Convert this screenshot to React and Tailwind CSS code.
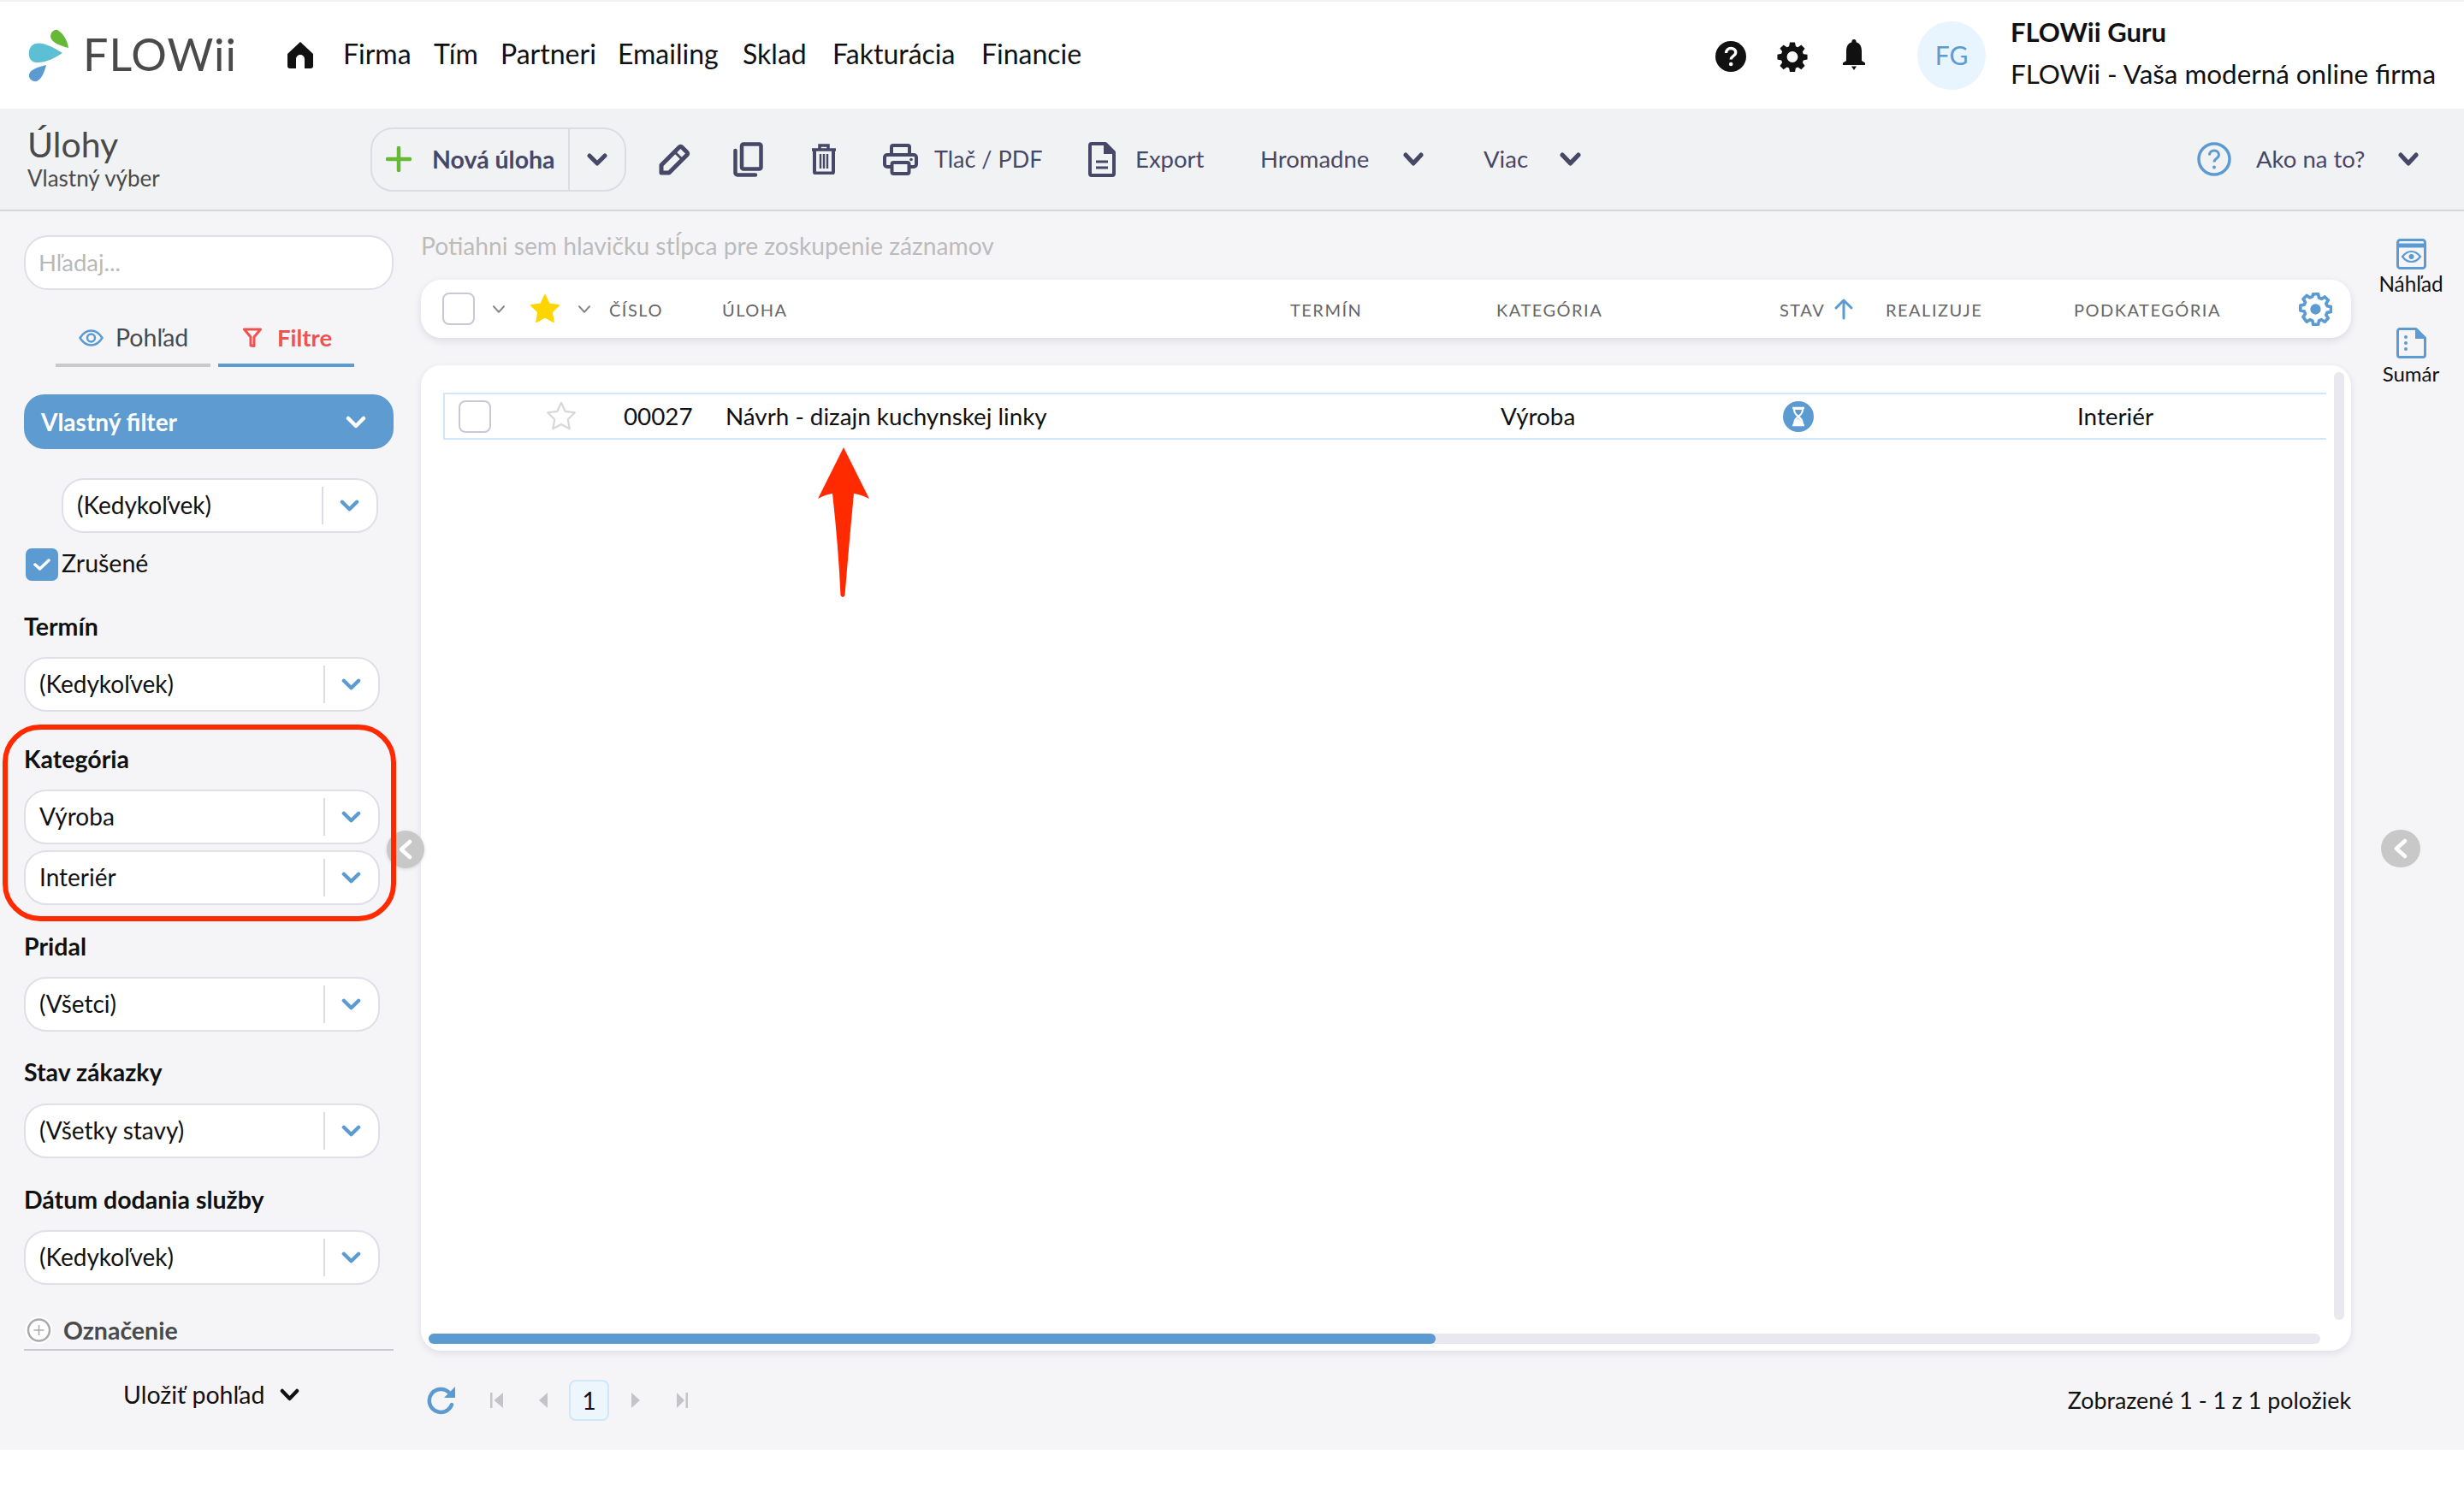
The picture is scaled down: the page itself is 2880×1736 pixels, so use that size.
import React from "react";

const Chev = ({ w = 24, h = 15, sw = 5, color = "#474867", className = "" }) => (
  <svg width={w} height={h} viewBox="0 0 24 15" className={"shrink-0 " + className} preserveAspectRatio="none">
    <polyline points="3,3 12,12 21,3" fill="none" stroke={color} strokeWidth={sw} strokeLinecap="round" strokeLinejoin="round" />
  </svg>
);

const STAR = "M12 1.5l3.2 6.8 7.3 1-5.3 5.2 1.3 7.4-6.5-3.6-6.5 3.6 1.3-7.4-5.3-5.2 7.3-1z";

const Select = ({ children, w = "w-[416px]", ml = "ml-[28px]", mt = "mt-[17px]" }) => (
  <div className={`${w} ${ml} ${mt} h-[64px] shrink-0 flex items-center rounded-[26px] border-2 border-[#dfdfe8] bg-white`}>
    <div className="flex-1 pl-[16px] -mt-[2px] text-[28px] text-[#111]">{children}</div>
    <div className="w-[2px] h-[44px] bg-[#dcdce4]" />
    <div className="w-[60px] mr-[2px] flex items-center justify-center">
      <Chev w={23} h={14} sw={4.5} color="#5c9bd1" />
    </div>
  </div>
);

const Label = ({ children, mt }) => (
  <div className={`${mt} ml-[28px] h-[36px] flex items-center text-[28.5px] font-bold text-[#111]`}><span className="-mt-[2px]">{children}</span></div>
);

const Nav = ({ w, children }) => <div className={`${w} shrink-0 text-[32px] text-[#111]`}>{children}</div>;

const Th = ({ w, children }) => (
  <div className={`${w} shrink-0 text-[20px] tracking-[1.5px] text-[#666]`}>{children}</div>
);

const Tool = ({ ml, w, children }) => (
  <div className={`${ml} ${w} shrink-0 text-[27.5px] text-[#474867] flex items-center`}>{children}</div>
);

export default function App() {
  return (
    <div className="relative w-[2880px] h-[1736px] overflow-hidden bg-white whitespace-nowrap [font-family:Lato,sans-serif]">
      <div className="h-[2px] bg-[#f1f1f3]" />
      {/* Header */}
      <header className="h-[125px] flex items-center bg-white">
        <svg width="50" height="62" viewBox="32 32 50 62" className="ml-[32px] shrink-0">
          <path d="M67 33C73 36 79 45 80 54C72 52 60 48 59 41C59 36 63 32 67 33Z" fill="#66b936" />
          <path d="M73 60C64 66 52 72 42 71C35 70 33 64 34 58C35 50 42 47 50 49C58 51 67 56 73 60Z" fill="#5dbfd3" />
          <path d="M54 74C52 82 49 90 43 93C38 94 33 90 34 85C35 79 46 76 54 74Z" fill="#5c9bd1" />
        </svg>
        <div className="ml-[15px] w-[239px] -mt-[3px] shrink-0 text-[52px] leading-none tracking-[1px] text-[#4a4a4a]">FLOWii</div>
        <svg width="30" height="31" viewBox="0 0 30 31" className="shrink-0">
          <path d="M15 0L30 14V28a3 3 0 0 1-3 3H20V20a5 5 0 0 0-10 0V31H3a3 3 0 0 1-3-3V14Z" fill="#111" />
        </svg>
        <div className="ml-[35px] -mt-[3px] flex">
          <Nav w="w-[106px]">Firma</Nav>
          <Nav w="w-[78px]">Tím</Nav>
          <Nav w="w-[137px]">Partneri</Nav>
          <Nav w="w-[146px]">Emailing</Nav>
          <Nav w="w-[105px]">Sklad</Nav>
          <Nav w="w-[174px]">Fakturácia</Nav>
          <Nav w="w-[117px]">Financie</Nav>
        </div>
        <svg width="36" height="36" viewBox="0 0 36 36" className="ml-[741px] mt-[2px] shrink-0">
          <circle cx="18" cy="18" r="18" fill="#111" />
          <path d="M12.5 14c0-3.5 2.5-5.5 5.7-5.5s5.500 2 5.500 4.800c0 4.500-5.500 4-5.500 8.200" fill="none" stroke="#fff" strokeWidth="3.4" />
          <circle cx="18.2" cy="27" r="2.3" fill="#fff" />
        </svg>
        <svg width="36" height="36" viewBox="0 0 24 24" className="ml-[36px] mt-[2px] shrink-0">
          <path fill="#111" fillRule="evenodd" d="M10 1h4l.6 3.100 1.700.7 2.600-1.800 2.800 2.800-1.800 2.600.7 1.700L23.700 10.500v3.900l-3.100.6-.7 1.700 1.800 2.600-2.800 2.800-2.600-1.800-1.700.7-.6 3.100h-4l-.6-3.100-1.700-.7-2.600 1.800-2.800-2.800 1.800-2.600-.7-1.700L.3 14.400v-3.900l3.100-.6.7-1.700-1.800-2.600L5.100 3l2.600 1.800 1.700-.7zM12 8a4.300 4.300 0 1 0 0 8.600A4.300 4.300 0 0 0 12 8z" />
        </svg>
        <svg width="28" height="36" viewBox="0 0 28 36" className="ml-[40px] shrink-0 -mt-[2px]">
          <path fill="#111" d="M14 0a2.500 2.500 0 0 1 2.500 3.200C21.500 4.500 23 9 23 14v11l4 2.500V30H1v-2.500L5 25V14c0-5 1.500-9.500 6.500-10.800A2.500 2.500 0 0 1 14 0z" />
          <path fill="#111" d="M11 31.500h6L14 36z" />
        </svg>
        <div className="ml-[60px] w-[80px] h-[80px] shrink-0 rounded-full bg-[#e8f4fe] flex items-center justify-center text-[30px] text-[#5c9bd1]">FG</div>
        <div className="ml-[29px] shrink-0">
          <div className="h-[40px] -mt-[5px] flex items-center text-[31px] font-bold text-[#111]">FLOWii Guru</div>
          <div className="h-[40px] mt-[9px] flex items-center text-[31.4px] text-[#111]">FLOWii - Vaša moderná online firma</div>
        </div>
      </header>

      {/* Toolbar */}
      <div className="h-[120px] flex items-center bg-[#f1f2f4] border-b-2 border-[#d5d6d9]">
        <div className="w-[433px] shrink-0 pl-[32px] text-[#4a4a4a]">
          <div className="text-[41px] leading-[44px] -mt-[2px]">Úlohy</div>
          <div className="text-[26px] leading-[32px] mt-[1px] text-[#4a4a4a]">Vlastný výber</div>
        </div>
        <div className="w-[299px] h-[75px] shrink-0 flex items-center rounded-[26px] border-2 border-[#dcdde4]">
          <svg width="30" height="30" viewBox="0 0 30 30" className="ml-[16px] shrink-0">
            <path d="M15 2v26M2 15h26" stroke="#66b936" strokeWidth="4.5" strokeLinecap="round" />
          </svg>
          <div className="ml-[24px] w-[159px] text-[28.5px] font-bold text-[#474867]">Nová úloha</div>
          <div className="w-[2px] h-full bg-[#dcdde4]" />
          <div className="flex-1 flex items-center justify-center"><Chev w={24} h={15} sw={5} /></div>
        </div>
        <svg width="37" height="37" viewBox="0 0 37 37" className="ml-[38px] shrink-0">
          <path d="M27 4l6 6a2 2 0 0 1 0 3L12 34H3V25L24 4a2 2 0 0 1 3 0Z" fill="none" stroke="#474867" strokeWidth="5" strokeLinejoin="round" />
          <path d="M19 10l8 8" stroke="#474867" strokeWidth="3" />
        </svg>
        <svg width="35" height="41" viewBox="0 0 35 41" className="ml-[50px] shrink-0">
          <rect x="10" y="2.5" width="22.5" height="29" rx="2" fill="none" stroke="#474867" strokeWidth="4.5" />
          <path d="M2.500 10v26a2.500 2.500 0 0 0 2.500 2.500H26" fill="none" stroke="#474867" strokeWidth="4.5" strokeLinecap="round" />
        </svg>
        <svg width="30" height="36" viewBox="0 0 30 36" className="ml-[56px] shrink-0">
          <path d="M1 7h28M10 6V2h10v4" fill="none" stroke="#474867" strokeWidth="3.5" />
          <path d="M4 7v26a1.500 1.500 0 0 0 1.500 1.500h19A1.500 1.500 0 0 0 26 33V7" fill="none" stroke="#474867" strokeWidth="4" />
          <path d="M11 12v17M15 12v17M19 12v17" stroke="#474867" strokeWidth="2.4" />
        </svg>
        <svg width="41" height="37" viewBox="0 0 41 37" className="ml-[54px] shrink-0">
          <path d="M10 13V4a2 2 0 0 1 2-2h17a2 2 0 0 1 2 2v9" fill="none" stroke="#474867" strokeWidth="4" />
          <path d="M9 27H5a3 3 0 0 1-3-3V16a3 3 0 0 1 3-3h31a3 3 0 0 1 3 3v8a3 3 0 0 1-3 3h-4" fill="none" stroke="#474867" strokeWidth="4" />
          <rect x="10.5" y="22" width="20" height="13" rx="2" fill="none" stroke="#474867" strokeWidth="4" />
          <circle cx="33" cy="18.5" r="1.8" fill="#474867" />
        </svg>
        <div className="ml-[19px] w-[125px] shrink-0 text-[27px] text-[#474867]">Tlač / PDF</div>
        <svg width="32" height="41" viewBox="0 0 32 41" className="ml-[55px] shrink-0">
          <path d="M4 2h16l10 10v25a2 2 0 0 1-2 2H4a2 2 0 0 1-2-2V4a2 2 0 0 1 2-2Z" fill="none" stroke="#474867" strokeWidth="4" strokeLinejoin="round" />
          <path d="M19 2v11h11" fill="#474867" stroke="#474867" strokeWidth="2" />
          <path d="M9 23h14M9 30h14" stroke="#474867" strokeWidth="3" />
        </svg>
        <Tool ml="ml-[23px]" w="w-[80px]">Export</Tool>
        <Tool ml="ml-[66px]" w="w-[129px]">Hromadne</Tool>
        <Chev w={24} h={16} className="ml-[38px]" />
        <Tool ml="ml-[70px]" w="w-[54px]">Viac</Tool>
        <Chev w={25} h={16} className="ml-[35px]" />
        <svg width="40" height="40" viewBox="0 0 40 40" className="ml-[720px] shrink-0">
          <circle cx="20" cy="20" r="18" fill="none" stroke="#5c9bd1" strokeWidth="3.5" />
          <path d="M14.500 15.500c0-3.500 2.500-5.500 5.500-5.500s5.500 2 5.500 5c0 4.500-5.500 4-5.500 8.500" fill="none" stroke="#5c9bd1" strokeWidth="3" />
          <circle cx="20" cy="29.5" r="2" fill="#5c9bd1" />
        </svg>
        <Tool ml="ml-[29px]" w="w-[128px]">Ako na to?</Tool>
        <Chev w={24} h={16} className="ml-[38px]" />
      </div>

      {/* Body */}
      <div className="h-[1448px] flex bg-[#f5f5f8]">
        {/* Sidebar */}
        <aside className="w-[492px] shrink-0 flex flex-col">
          <div className="mt-[28px] ml-[28px] w-[432px] h-[64px] rounded-[28px] border-2 border-[#dfdfe8] bg-white flex items-center pl-[15px] text-[27.5px] text-[#b9b9b9]">Hľadaj...</div>
          <div className="mt-[25px] ml-[65px] flex gap-[9px]">
            <div className="w-[181px] h-[65px] border-b-4 border-[#c9c9c9] flex items-center pl-[27px] text-[28.5px] text-[#4a4a4a]">
              <svg width="29" height="20" viewBox="0 0 29 20" className="shrink-0 mr-[14px]">
                <path d="M1.500 10C5 4.500 9.500 1.500 14.500 1.500S24 4.500 27.500 10C24 15.500 19.500 18.500 14.500 18.500S5 15.500 1.500 10Z" fill="none" stroke="#5c9bd1" strokeWidth="2.5" />
                <circle cx="14.5" cy="10" r="4.5" fill="none" stroke="#5c9bd1" strokeWidth="2.5" />
              </svg>
              Pohľad
            </div>
            <div className="w-[159px] h-[65px] border-b-4 border-[#5c9bd1] flex items-center pl-[29px] text-[27.5px] font-bold text-[#ef5350]">
              <svg width="22" height="23" viewBox="0 0 22 23" className="shrink-0 mr-[18px]">
                <path d="M1.500 2h19L13 11v10.500L9 21V11Z" fill="none" stroke="#ef5350" strokeWidth="3" strokeLinejoin="round" />
              </svg>
              Filtre
            </div>
          </div>
          <div className="mt-[32px] ml-[28px] w-[432px] h-[64px] shrink-0 rounded-[24px] bg-[#5e9bd0] flex items-center justify-between pl-[20px] pr-[32px] text-[28px] font-bold text-white">
            Vlastný filter
            <Chev w={24} h={15} sw={4.5} color="#fff" />
          </div>
          <Select w="w-[370px]" ml="ml-[72px]" mt="mt-[34px]">(Kedykoľvek)</Select>
          <div className="mt-[18px] ml-[30px] h-[38px] flex items-center text-[28.5px] text-[#111]">
            <div className="w-[38px] h-[38px] rounded-[7px] bg-[#5c9bd1] flex items-center justify-center mr-[4px]">
              <svg width="20" height="16" viewBox="0 0 20 16"><polyline points="2,8 7.5,13 18,3" fill="none" stroke="#fff" strokeWidth="3.5" strokeLinecap="round" strokeLinejoin="round" /></svg>
            </div>
            <span className="-mt-[3px]">Zrušené</span>
          </div>
          <Label mt="mt-[36px]">Termín</Label>
          <Select>(Kedykoľvek)</Select>
          <Label mt="mt-[38px]">Kategória</Label>
          <Select>Výroba</Select>
          <Select mt="mt-[7px]">Interiér</Select>
          <Label mt="mt-[31px]">Pridal</Label>
          <Select>(Všetci)</Select>
          <Label mt="mt-[30px]">Stav zákazky</Label>
          <Select mt="mt-[18px]">(Všetky stavy)</Select>
          <Label mt="mt-[31px]">Dátum dodania služby</Label>
          <Select>(Kedykoľvek)</Select>
          <div className="mt-[36px] ml-[29px] h-[34px] flex items-center text-[28.5px] font-bold text-[#4a4a4a]">
            <svg width="33" height="34" viewBox="0 0 33 34" className="shrink-0 mr-[12px]">
              <circle cx="16.5" cy="17" r="16" fill="#fff" />
              <circle cx="16.5" cy="17" r="12.5" fill="none" stroke="#aaa" strokeWidth="2.5" />
              <path d="M16.500 11v12M10.500 17h12" stroke="#aaa" strokeWidth="1.5" />
            </svg>
            Označenie
          </div>
          <div className="mt-[5px] ml-[28px] w-[432px] h-[2px] bg-[#c9c9cf]" />
          <div className="mt-[34px] ml-[144px] h-[36px] flex items-center text-[28.5px] text-[#111]">
            <span className="-mt-[1px]">Uložiť pohľad</span>
            <Chev w={23} h={15} sw={4.5} color="#111" className="ml-[18px] -mt-[1px]" />
          </div>
        </aside>

        {/* Main */}
        <main className="w-[2256px] shrink-0 flex flex-col">
          <div className="mt-[22px] h-[36px] flex items-center text-[28.2px] text-[#bcbcbc]">Potiahni sem hlavičku stĺpca pre zoskupenie záznamov</div>
          <div className="mt-[22px] h-[68px] shrink-0 rounded-[24px] bg-white shadow-[0_3px_8px_rgba(60,60,90,0.14)] flex items-center pl-[25px]">
            <div className="w-[38px] h-[38px] shrink-0 rounded-[8px] border-2 border-[#c8c8d8]" />
            <Chev w={16} h={11} sw={3} color="#888" className="ml-[20px]" />
            <svg width="36" height="34" viewBox="1 1 22 22" className="ml-[28px] shrink-0"><path d={STAR} fill="#ffd500" stroke="#ffd500" strokeWidth="1" strokeLinejoin="round" /></svg>
            <Chev w={16} h={11} sw={3} color="#888" className="ml-[20px]" />
            <div className="ml-[21px] mt-[2px] flex items-center">
              <Th w="w-[132px]">ČÍSLO</Th>
              <Th w="w-[664px]">ÚLOHA</Th>
              <Th w="w-[241px]">TERMÍN</Th>
              <Th w="w-[331px]">KATEGÓRIA</Th>
              <div className="w-[124px] shrink-0 flex items-center text-[20px] tracking-[1.5px] text-[#666]">
                STAV
                <svg width="24" height="26" viewBox="0 0 24 26" className="ml-[10px] -mt-[2px]">
                  <path d="M12 24V3M3 12l9-9 9 9" fill="none" stroke="#5c9bd1" strokeWidth="3" strokeLinecap="round" strokeLinejoin="round" />
                </svg>
              </div>
              <Th w="w-[220px]">REALIZUJE</Th>
              <Th w="w-[263px]">PODKATEGÓRIA</Th>
            </div>
            <svg width="39" height="39" viewBox="0 0 24 24" className="shrink-0">
              <path fill="none" stroke="#5c9bd1" strokeWidth="2.5" strokeLinejoin="round" d="M10 1.500h4l.6 3 2 .9 2.600-1.700 2.800 2.800-1.700 2.600.9 2 3 .6v4l-3 .6-.9 2 1.700 2.600-2.800 2.800-2.600-1.700-2 .9-.6 3h-4l-.6-3-2-.9-2.600 1.700L2 19.900l1.700-2.600-.9-2-3-.6v-4l3-.6.9-2L2 5.500l2.800-2.800 2.600 1.700 2-.9z" transform="translate(1.300 -.3) scale(.9)" />
              <circle cx="12" cy="12" r="3.8" fill="#5c9bd1" />
            </svg>
          </div>
          <div className="relative mt-[32px] h-[1152px] shrink-0 rounded-[24px] bg-white shadow-[0_3px_8px_rgba(60,60,90,0.12)] pt-[32px] pl-[26px]">
            <div className="w-[2201px] h-[55px] flex items-center border-y-2 border-l-2 border-[#cfe6fb] pl-[16px] text-[27.8px] text-[#111]">
              <div className="w-[38px] h-[38px] shrink-0 rounded-[8px] border-2 border-[#c8c8d8]" />
              <svg width="34" height="33" viewBox="1 1 22 22" className="ml-[65px] shrink-0"><path d={STAR} fill="none" stroke="#d8d8d8" strokeWidth="1.5" strokeLinejoin="round" /></svg>
              <div className="ml-[56px] w-[119px] shrink-0">00027</div>
              <div className="w-[906px] shrink-0">Návrh - dizajn kuchynskej linky</div>
              <div className="w-[330px] shrink-0">Výroba</div>
              <div className="w-[344px] shrink-0">
                <svg width="36" height="36" viewBox="0 0 36 36">
                  <circle cx="18" cy="18" r="18" fill="#5c9bd1" />
                  <path d="M11 8h14M11 28h14" stroke="#fff" strokeWidth="2.5" />
                  <path d="M13 9c0 6 3 7 5 9-2 2-5 3-5 9h10c0-6-3-7-5-9 2-2 5-3 5-9z" fill="none" stroke="#fff" strokeWidth="2" />
                  <path d="M13.500 27c0-4 3-5.500 4.500-7 1.500 1.500 4.500 3 4.500 7z" fill="#fff" />
                </svg>
              </div>
              <div>Interiér</div>
            </div>
            <div className="absolute left-[2236px] top-[8px] w-[12px] h-[1108px] rounded-full bg-[#e8e8ee]" />
            <div className="absolute left-[9px] top-[1132px] w-[2211px] h-[12px] rounded-full bg-[#e8e8ee]">
              <div className="w-[1177px] h-full rounded-full bg-[#5c9bd1]" />
            </div>
          </div>
          <div className="mt-[34px] h-[48px] flex items-center">
            <svg width="34" height="34" viewBox="0 0 34 34" className="ml-[7px] shrink-0">
              <path d="M29 22a13.500 13.500 0 1 1-3-14" fill="none" stroke="#5c9bd1" strokeWidth="4.5" strokeLinecap="round" />
              <path d="M33 1v13H20z" fill="#5c9bd1" />
            </svg>
            <svg width="15" height="18" viewBox="0 0 15 18" className="ml-[40px] shrink-0"><path d="M0 0h2.500v18H0zM15 0v18L4.500 9z" fill="#c4c4c8" /></svg>
            <svg width="10" height="18" viewBox="0 0 10 18" className="ml-[42px] shrink-0"><path d="M10 0v18L0 9z" fill="#c4c4c8" /></svg>
            <div className="ml-[25px] w-[47px] h-[48px] shrink-0 rounded-[8px] border-2 border-[#cfe6fb] bg-[#eef6fd] flex items-center justify-center text-[28px] text-[#111]">1</div>
            <svg width="10" height="18" viewBox="0 0 10 18" className="ml-[26px] shrink-0"><path d="M0 0v18L10 9z" fill="#c4c4c8" /></svg>
            <svg width="13" height="18" viewBox="0 0 13 18" className="ml-[43px] shrink-0"><path d="M13 0h-2.500v18H13zM0 0v18L9 9z" fill="#c4c4c8" /></svg>
            <div className="ml-auto text-[26.8px] text-[#111]">Zobrazené 1 - 1 z 1 položiek</div>
          </div>
        </main>

        {/* Right rail */}
        <div className="w-[132px] shrink-0 pl-[8px] flex flex-col items-center">
          <svg width="35" height="36" viewBox="0 0 35 36" className="mt-[32px] shrink-0">
            <rect x="1.5" y="1.5" width="32" height="33" rx="3" fill="none" stroke="#5c9bd1" strokeWidth="3" />
            <path d="M1.500 8h32" stroke="#5c9bd1" strokeWidth="5" />
            <path d="M7 21c3-4 6.500-6 10.500-6s7.500 2 10.500 6c-3 4-6.500 6-10.500 6S10 25 7 21Z" fill="none" stroke="#5c9bd1" strokeWidth="2.2" />
            <circle cx="17.5" cy="21" r="3" fill="#5c9bd1" />
          </svg>
          <div className="mt-[2px] h-[30px] flex items-center text-[24.3px] text-[#111]">Náhľad</div>
          <svg width="35" height="36" viewBox="0 0 35 36" className="mt-[36px] shrink-0">
            <path d="M4 1.500h19L33.500 12v20a2.500 2.500 0 0 1-2.500 2.500H4A2.500 2.500 0 0 1 1.500 32V4A2.500 2.500 0 0 1 4 1.500Z" fill="none" stroke="#5c9bd1" strokeWidth="3" strokeLinejoin="round" />
            <path d="M22 2v11h11z" fill="#5c9bd1" />
            <circle cx="11" cy="11" r="2" fill="#5c9bd1" /><circle cx="11" cy="18" r="2" fill="#5c9bd1" /><circle cx="11" cy="25" r="2" fill="#5c9bd1" />
          </svg>
          <div className="mt-[3px] h-[30px] flex items-center text-[24px] text-[#111]">Sumár</div>
        </div>
      </div>

      {/* Collapse buttons */}
      <div className="absolute left-[452px] top-[971px] w-[44px] h-[44px] rounded-full bg-[#c8c8c8] shadow-[0_1px_4px_rgba(0,0,0,0.12)] flex items-center justify-center">
        <svg width="16" height="24" viewBox="0 0 16 24"><polyline points="13,3 3,12 13,21" fill="none" stroke="#fff" strokeWidth="4.5" strokeLinecap="round" strokeLinejoin="round" /></svg>
      </div>
      <div className="absolute left-[2783px] top-[970px] w-[46px] h-[44px] rounded-full bg-[#c8c8c8] flex items-center justify-center">
        <svg width="16" height="24" viewBox="0 0 16 24"><polyline points="13,3 3,12 13,21" fill="none" stroke="#fff" strokeWidth="4.5" strokeLinecap="round" strokeLinejoin="round" /></svg>
      </div>

      {/* Annotations */}
      <div className="absolute left-[3px] top-[847px] w-[460px] h-[230px] rounded-[44px] border-[6px] border-[#ff2a00]" />
      <svg width="70" height="182" viewBox="950 520 70 182" className="absolute left-[950px] top-[520px]">
        <path d="M986 523L1016 583Q1006 578 998 577Q992 640 987.500 696Q985 700 982.500 696Q980 640 973 577Q965 578 956 583Z" fill="#ff2a00" />
      </svg>
    </div>
  );
}
